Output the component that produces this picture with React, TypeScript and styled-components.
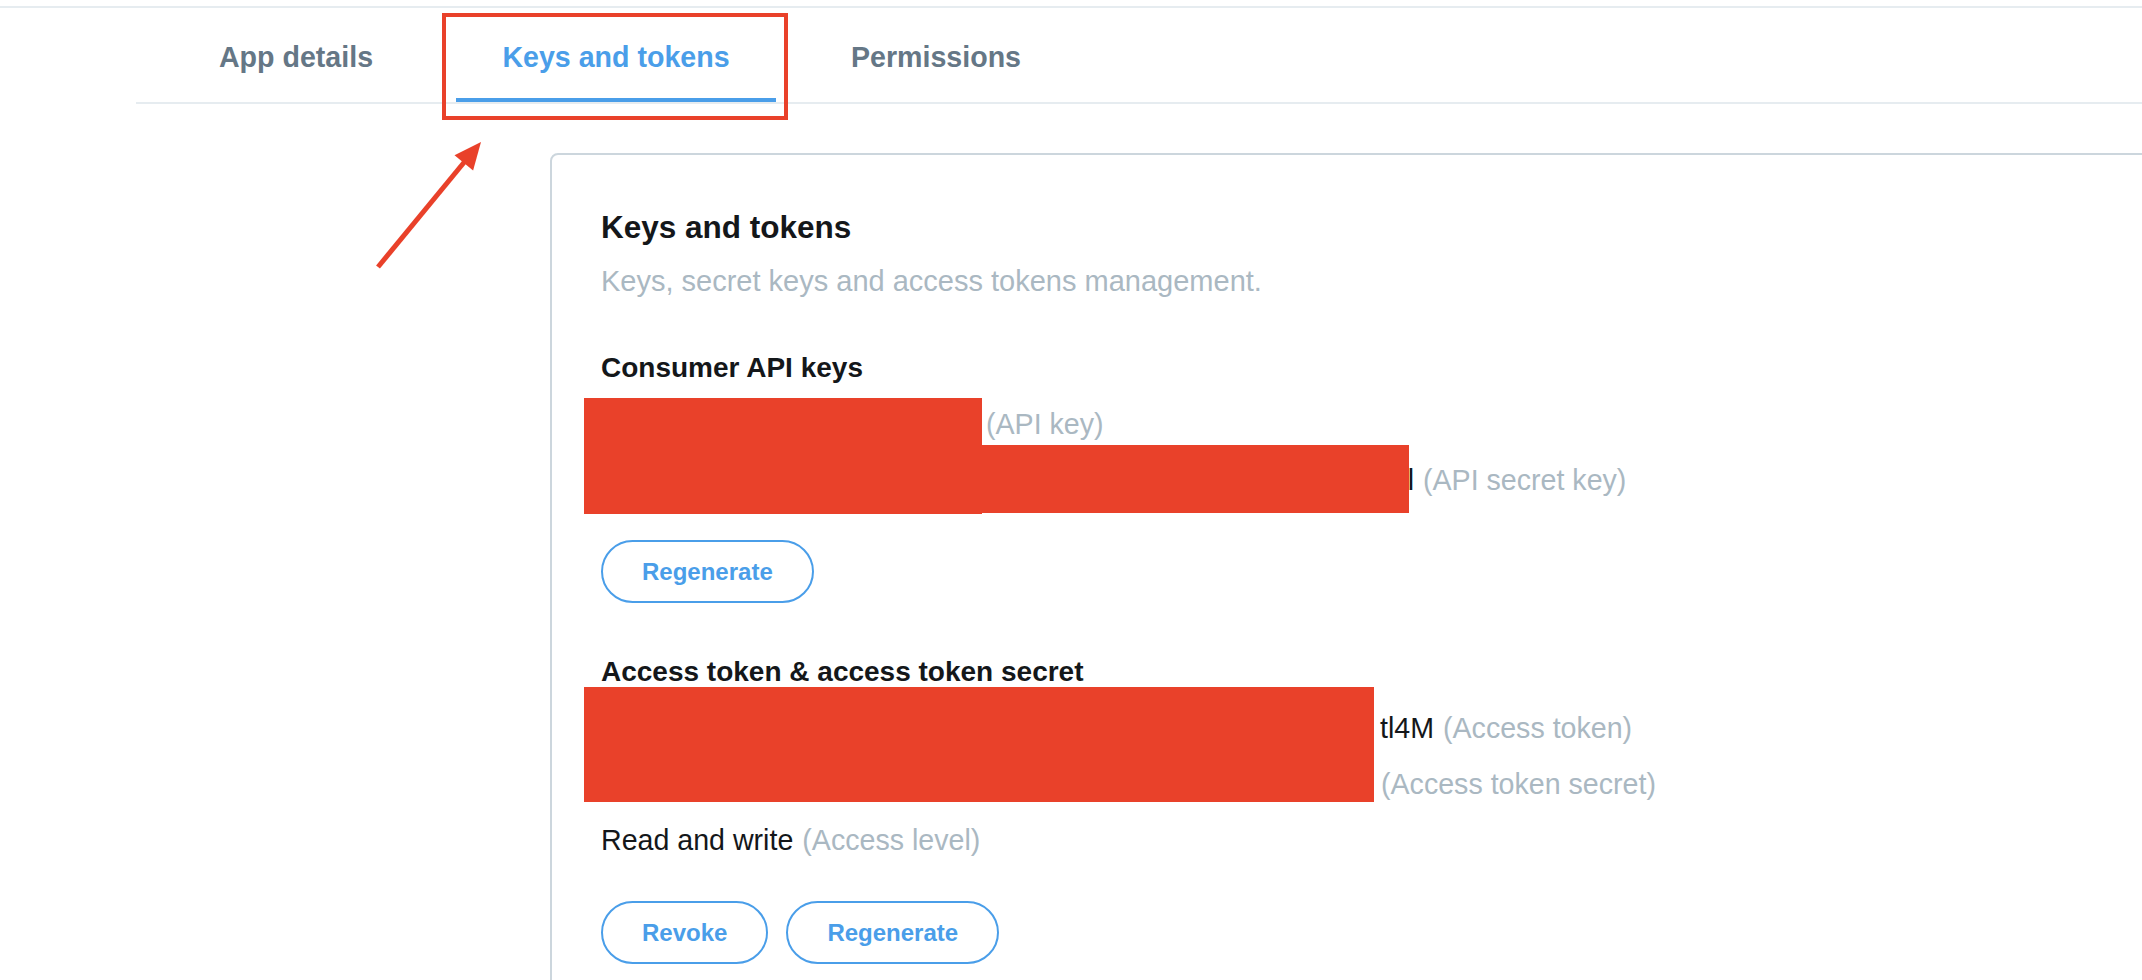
import React from "react";
import styled, { createGlobalStyle } from "styled-components";

const GlobalStyle = createGlobalStyle`
  html, body {
    margin: 0;
    padding: 0;
    background: #ffffff;
  }
  body {
    font-family: "Liberation Sans", Arial, Helvetica, sans-serif;
    color: #14171a;
  }
  * { box-sizing: border-box; }
`;

const BLUE = "#4a9ee9";
const MUTED = "#aab8c2";
const RED = "#e9412a";

const Page = styled.div`
  position: relative;
  width: 2142px;
  height: 980px;
  overflow: hidden;
  padding-top: 6px;
`;

const TopRule = styled.div`
  height: 2px;
  background: #e6ecf0;
`;

const TabBar = styled.nav`
  display: flex;
  margin-left: 136px;
  border-bottom: 2px solid #e6ecf0;
`;

const Tab = styled.div<{ $active?: boolean }>`
  position: relative;
  width: 320px;
  height: 94px;
  padding-top: 4px;
  display: flex;
  align-items: center;
  justify-content: center;
  font-size: 28.6px;
  font-weight: 700;
  color: ${(p) => (p.$active ? BLUE : "#657786")};
  &::after {
    content: "";
    display: ${(p) => (p.$active ? "block" : "none")};
    position: absolute;
    left: 0;
    right: 0;
    bottom: 0;
    height: 4px;
    background: ${BLUE};
  }
`;

const Highlight = styled.div`
  position: absolute;
  left: 442px;
  top: 13px;
  width: 346px;
  height: 107px;
  border: 4px solid ${RED};
`;

const Arrow = styled.svg`
  position: absolute;
  left: 360px;
  top: 130px;
`;

const Card = styled.section`
  margin: 49px 0 0 550px;
  width: 1700px;
  height: 900px;
  border: 2px solid #ccd6dd;
  border-radius: 8px;
  padding: 52px 0 0 49px;
`;

const Title = styled.h2`
  margin: 0;
  font-size: 31.5px;
  line-height: 40px;
  font-weight: 700;
  color: #14171a;
`;

const Subtitle = styled.p`
  margin: 14px 0 0;
  font-size: 29px;
  line-height: 40px;
  color: ${MUTED};
`;

const SectionTitle = styled.h3<{ $gap: number }>`
  margin: ${(p) => p.$gap}px 0 0;
  font-size: 28px;
  line-height: 56px;
  font-weight: 700;
  color: #14171a;
`;

const KeyGroup = styled.div`
  position: relative;
`;

const Line = styled.div`
  font-size: 28.6px;
  line-height: 56px;
  white-space: nowrap;
  color: #14171a;
`;

const Value = styled.span<{ $w: number }>`
  display: inline-block;
  width: ${(p) => p.$w}px;
  text-align: right;
  overflow: hidden;
  vertical-align: top;
`;

const Hint = styled.span`
  margin-left: 9px;
  color: ${MUTED};
`;

const Redaction = styled.div`
  position: absolute;
  background: ${RED};
`;

const ButtonRow = styled.div<{ $gap: number }>`
  display: flex;
  gap: 18px;
  margin-top: ${(p) => p.$gap}px;
`;

const PillButton = styled.button`
  height: 63px;
  padding: 0 39px;
  border: 2px solid ${BLUE};
  border-radius: 999px;
  background: #ffffff;
  color: ${BLUE};
  font-family: "Liberation Sans", Arial, Helvetica, sans-serif;
  font-size: 24px;
  font-weight: 700;
  cursor: pointer;
`;

export default function App() {
  return (
    <>
      <GlobalStyle />
      <Page>
        <TopRule />
        <TabBar>
          <Tab>App details</Tab>
          <Tab $active>Keys and tokens</Tab>
          <Tab>Permissions</Tab>
        </TabBar>

        <Card>
          <Title>Keys and tokens</Title>
          <Subtitle>Keys, secret keys and access tokens management.</Subtitle>

          <SectionTitle $gap={39}>Consumer API keys</SectionTitle>
          <KeyGroup>
            <Line>
              <Value $w={376} />
              <Hint>(API key)</Hint>
            </Line>
            <Line>
              <Value $w={813}>l</Value>
              <Hint>(API secret key)</Hint>
            </Line>
            <Redaction style={{ left: -17, top: 2, width: 398, height: 116 }} />
            <Redaction style={{ left: 381, top: 49, width: 427, height: 68 }} />
          </KeyGroup>
          <ButtonRow $gap={32}>
            <PillButton>Regenerate</PillButton>
          </ButtonRow>

          <SectionTitle $gap={41}>Access token &amp; access token secret</SectionTitle>
          <KeyGroup>
            <Line>
              <Value $w={833}>tl4M</Value>
              <Hint>(Access token)</Hint>
            </Line>
            <Line>
              <Value $w={771} />
              <Hint>(Access token secret)</Hint>
            </Line>
            <Line>
              Read and write<Hint>(Access level)</Hint>
            </Line>
            <Redaction style={{ left: -17, top: -13, width: 790, height: 115 }} />
          </KeyGroup>
          <ButtonRow $gap={33}>
            <PillButton>Revoke</PillButton>
            <PillButton>Regenerate</PillButton>
          </ButtonRow>
        </Card>

        <Highlight />
        <Arrow width="140" height="150" viewBox="0 0 140 150">
          <line x1="18" y1="137" x2="106" y2="30" stroke={RED} strokeWidth="5" />
          <polygon points="121,12 94.5,25.2 113.1,40.4" fill={RED} />
        </Arrow>
      </Page>
    </>
  );
}
